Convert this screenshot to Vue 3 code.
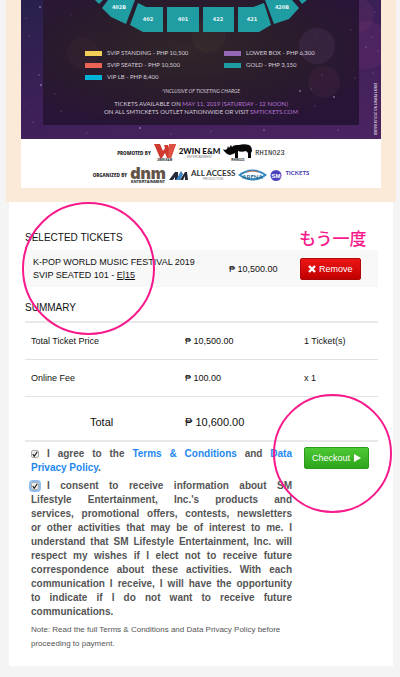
<template>
  <main class="page">
    <section class="frame">
      <div class="poster">
        <div class="art">
          <svg class="sky" viewBox="0 0 360 139" preserveAspectRatio="xMidYMin slice" aria-hidden="true">
            <defs>
              <radialGradient id="hall" cx="45%" cy="40%" r="65%">
                <stop offset="0" stop-color="#30262a" />
                <stop offset="0.55" stop-color="#2a1c2c" />
                <stop offset="1" stop-color="#281437" />
              </radialGradient>
            </defs>
            <circle cx="345" cy="45" r="24" fill="#6b2f6c" opacity="0.3" />
            <circle cx="335" cy="15" r="18" fill="#7d3a6c" opacity="0.2" />
            <rect x="22" y="0" width="316" height="125" fill="url(#hall)" />
            <circle cx="296" cy="46" r="18" fill="#6a4c7b" opacity="0.2" />
            <circle cx="303" cy="82" r="16" fill="#7b3f60" opacity="0.12" />
            <circle cx="188" cy="36" r="17" fill="#7b6a50" opacity="0.08" />
            <circle cx="62" cy="53" r="16" fill="#7b4a50" opacity="0.08" />
            <circle
              v-for="(star, i) in stars"
              :key="i"
              :cx="star[0]"
              :cy="star[1]"
              :r="star[2]"
              fill="#d9b9e6"
              opacity="0.5"
            />
            <g v-for="seat in seats" :key="seat.points">
              <polygon :points="seat.points" fill="#209da3" />
              <text :x="seat.x" :y="seat.y" class="seat-label">{{ seat.label }}</text>
            </g>
          </svg>

          <div class="art-text">
            <div class="legend">
              <ul v-for="(column, i) in legend" :key="i">
                <li v-for="item in column" :key="item.name">
                  <span class="swatch" :style="{ background: item.color }"></span>{{ item.name }} - PHP {{ item.price }}
                </li>
              </ul>
            </div>
            <p class="charge">*INCLUSIVE OF TICKETING CHARGE</p>
            <p class="outlet">TICKETS AVAILABLE ON <b>MAY 11, 2019 (SATURDAY - 12 NOON)</b></p>
            <p class="outlet">ON ALL SMTICKETS OUTLET NATIONWIDE OR VISIT <b>SMTICKETS.COM</b></p>
          </div>
          <small class="credit">EVENT PERMIT NO. 2019-04 ISSUED</small>
        </div>

        <div class="sponsors">
          <div class="sponsor-row">
            <span class="role">PROMOTED BY</span>
            <span class="logo">
              <svg width="22" height="14" viewBox="0 0 22 14" aria-hidden="true">
                <path d="M0 0h6l3 7 2-3-1-3h4l2 6 2-7h4l-5 14h-4l-2-5-3 5H6z" fill="#cf3a30" />
                <path d="M15 0h7l-5 14h-3z" fill="#de5243" />
              </svg>
              <small>2WIN E&amp;M</small>
            </span>
            <span class="logo twin"><b>2WIN E&amp;M</b><small>ENTERTAINMENT</small></span>
            <span class="logo">
              <svg width="29" height="14" viewBox="0 0 29 14" aria-hidden="true">
                <path
                  d="M0 5l2 1 2-1 1-3 1 2 2-3 1 2c2-2 4-2 7-2 3-1 7-1 10 0 2 1 3 3 3 6l-1 2v5h-3v-5l-2-2c-3 1-6 1-8 0v7h-3V9l-2 1-3 1-3-1-3-3z"
                  fill="#080808"
                />
              </svg>
              <small>RHINO23</small>
            </span>
            <span class="rhino">RHINO23</span>
          </div>
          <div class="sponsor-row">
            <span class="role">ORGANIZED BY</span>
            <span class="logo dnm"><b>dnm</b><small>ENTERTAINMENT</small></span>
            <svg width="19" height="9" viewBox="0 0 19 9" aria-hidden="true">
              <path d="M0 9l6-8h3v8H6V6L4 9z" fill="#252a38" />
              <path d="M7 9l5-9 2 3-3 6z" fill="#3b83bf" />
              <path d="M11 9l5-8h2l1 8h-3V5l-2 4z" fill="#222736" />
            </svg>
            <span class="logo access"><b>ALL ACCESS</b><small>PRODUCTION</small></span>
            <svg class="arena" width="29" height="13" viewBox="0 0 29 13" aria-hidden="true">
              <path d="M0 6Q14-5 29 6 15 17 0 6z" fill="#2e86bd" />
              <path d="M3 6q11-7 23 0-12 7-23 0z" fill="#fff" />
              <path d="M9 3q5-2 11 0" fill="none" stroke="#d5795f" />
              <text x="14.5" y="10">ARENA</text>
            </svg>
            <svg width="12" height="13" viewBox="0 0 12 13" aria-hidden="true">
              <circle cx="6" cy="6.5" r="5.5" fill="#4b43bd" />
              <text x="6" y="9" class="sm">SM</text>
            </svg>
            <span class="logo tickets"><b>TICKETS</b><small>· · · · · ·</small></span>
          </div>
        </div>
      </div>
    </section>

    <section class="card">
      <div class="title-row">
        <h2>SELECTED TICKETS</h2>
        <span class="again">もう一度</span>
      </div>

      <div class="ticket">
        <p class="event">K-POP WORLD MUSIC FESTIVAL 2019<br />SVIP SEATED 101 - <u>E|15</u></p>
        <span class="amount">₱ 10,500.00</span>
        <button type="button" class="btn remove">
          <svg width="8" height="8" viewBox="0 0 8 8" aria-hidden="true">
            <path d="M1 1l6 6M7 1L1 7" stroke="#fff" stroke-width="2.4" />
          </svg>
          Remove
        </button>
      </div>

      <h2 class="summary-title">SUMMARY</h2>
      <table class="summary">
        <tbody>
          <tr v-for="row in summary" :key="row.label">
            <th scope="row">{{ row.label }}</th>
            <td>₱ {{ row.amount }}</td>
            <td>{{ row.count }}</td>
          </tr>
          <tr class="total">
            <th scope="row">Total</th>
            <td>₱ 10,600.00</td>
            <td></td>
          </tr>
        </tbody>
      </table>

      <div class="confirm">
        <div class="terms">
          <p>
            <input id="agree" v-model="agree" type="checkbox" /><label for="agree">I agree to the</label>{{ ' ' }}
            <a href="#terms">Terms &amp; Conditions</a> and <a href="#privacy">Data</a>
            <span class="last-line"><a href="#privacy">Privacy Policy</a>.</span>
          </p>
          <p>
            <input id="consent" v-model="consent" type="checkbox" class="focused" /><label for="consent"
              ><template v-for="(line, i) in consentLines" :key="line"><br v-if="i" />{{ line }}</template
              ><span class="last-line">communications.</span></label
            >
          </p>
          <p class="note">
            Note: Read the full Terms &amp; Conditions and Data Privacy Policy before proceeding to payment.
          </p>
        </div>
        <div class="checkout">
          <button type="button" class="btn go">
            Checkout
            <svg width="8" height="8" viewBox="0 0 8 8" aria-hidden="true"><path d="M1 0l7 4-7 4z" fill="#fff" /></svg>
          </button>
          <span class="ring ring-checkout"></span>
        </div>
      </div>
      <span class="ring ring-ticket"></span>
    </section>
  </main>
</template>

<script setup>
import { ref } from 'vue';

const agree = ref(true);
const consent = ref(true);

const legend = [
  [
    { name: 'SVIP STANDING', price: '10,500', color: '#f4cf57' },
    { name: 'SVIP SEATED', price: '10,500', color: '#ea6355' },
    { name: 'VIP LB', price: '8,400', color: '#00b5d5' },
  ],
  [
    { name: 'LOWER BOX', price: '6,300', color: '#9468b5' },
    { name: 'GOLD', price: '3,150', color: '#209da3' },
  ],
];

const seats = [
  { label: '', x: 0, y: 0, points: '74,0 82,0 78,4' },
  { label: '402B', x: 98, y: 9, points: '87,0 114,0 105,24 90,17 81,8' },
  { label: '402', x: 127, y: 21, points: '117,3 125,7 142,7 142,32 122,32 109,25' },
  { label: '401', x: 162, y: 21, points: '146,7 178,7 178,32 146,32' },
  { label: '422', x: 197, y: 21, points: '182,7 213,7 213,32 182,32' },
  { label: '421', x: 231, y: 21, points: '217,7 232,7 243,3 250,25 238,32 217,32' },
  { label: '420B', x: 261, y: 9, points: '244,0 271,0 278,8 268,19 253,24' },
  { label: '', x: 0, y: 0, points: '278,0 286,0 281,4' },
];

// x, y, radius
const stars = [
  [19, 7, 1], [5, 18, 0.5], [8, 36, 0.5], [18, 75, 0.7], [20, 85, 1], [34, 94, 0.5],
  [40, 111, 0.6], [119, 128, 1], [12, 122, 0.6], [3, 104, 0.5], [66, 133, 0.5], [190, 131, 0.6],
  [301, 75, 0.6], [279, 91, 1], [290, 89, 0.6], [313, 97, 1], [262, 103, 0.6], [345, 47, 0.7],
  [351, 37, 0.5], [357, 51, 0.6], [352, 73, 0.5], [334, 78, 0.6], [294, 106, 0.5], [243, 130, 0.8],
  [330, 30, 0.5], [296, 35, 0.4], [50, 15, 0.4], [317, 130, 0.6], [150, 134, 0.5], [354, 12, 0.5],
];

const summary = [
  { label: 'Total Ticket Price', amount: '10,500.00', count: '1 Ticket(s)' },
  { label: 'Online Fee', amount: '100.00', count: 'x 1' },
];

const consentLines = [
  'I consent to receive information about SM',
  "Lifestyle Entertainment, Inc.'s products and",
  'services, promotional offers, contests, newsletters',
  'or other activities that may be of interest to me. I',
  'understand that SM Lifestyle Entertainment, Inc. will',
  'respect my wishes if I elect not to receive future',
  'correspondence about these activities. With each',
  'communication I receive, I will have the opportunity',
  'to indicate if I do not want to receive future',
];
</script>

<style>
body {
  margin: 0;
  background: #f4f4f4;
}
</style>

<style scoped>
* {
  box-sizing: border-box;
}
.page {
  padding: 0 4px 9px 6px;
  font-family: 'Liberation Sans', 'Noto Sans CJK JP', sans-serif;
  font-size: 9px;
  color: #111;
}
p,
h2,
ul {
  margin: 0;
  padding: 0;
}
.frame {
  padding: 0 15px 14px;
  background: #faead7;
}
.poster {
  background: #fff;
}
.art {
  position: relative;
  padding-top: 47px;
  height: 139px;
  overflow: hidden;
  background: linear-gradient(165deg, #28204c, #40205a 55%, #4b2462);
}
.sky {
  position: absolute;
  inset: 0;
  width: 100%;
  height: 100%;
}
.seat-label {
  fill: #e9f6f6;
  font: bold 5px 'DejaVu Sans', sans-serif;
  text-anchor: middle;
}
.art-text {
  position: relative;
  font-family: Lato, sans-serif;
  color: #d5ccd9;
  text-align: center;
}
.legend {
  display: grid;
  grid-template-columns: 139px 1fr;
  padding-left: 64px;
  font-size: 6px;
  line-height: 12px;
  text-align: left;
}
.legend li {
  display: flex;
  align-items: center;
  gap: 5px;
}
.swatch {
  width: 17px;
  height: 5px;
}
.charge {
  padding-top: 4px;
  font-size: 5px;
  font-style: italic;
  line-height: 8px;
}
.outlet {
  font-size: 6px;
  line-height: 8px;
}
.charge + .outlet {
  padding-top: 5px;
}
.outlet b {
  font-weight: normal;
  color: #b573d3;
}
.credit {
  position: absolute;
  right: 4px;
  bottom: 4px;
  writing-mode: vertical-rl;
  font-size: 3px;
  font-weight: bold;
  line-height: 4px;
  white-space: nowrap;
  color: #d8c8de;
}
.sponsors {
  padding: 3px 0 2px;
}
.sponsor-row {
  display: flex;
  align-items: center;
  justify-content: center;
  gap: 3px;
  height: 22px;
  color: #111;
}
.role {
  font: bold 6px 'Open Sans Condensed', 'DejaVu Sans Condensed', sans-serif;
}
.logo {
  display: flex;
  flex-direction: column;
  align-items: center;
}
.logo small {
  font-size: 3px;
  font-weight: bold;
  line-height: 4px;
}
.logo b {
  font-family: Lato, sans-serif;
  font-size: 8px;
  font-weight: 900;
  line-height: 8px;
}
.twin small,
.access small,
.tickets small {
  font-weight: normal;
  color: #777;
}
.rhino {
  font: 7px 'Liberation Mono', monospace;
}
.logo.dnm b {
  font-family: Inter, sans-serif;
  font-size: 16px;
  line-height: 14px;
  color: #655448;
}
.logo.dnm small {
  font-size: 4px;
}
.logo.access b {
  font-weight: 700;
  color: #333;
}
.arena text {
  fill: #17658f;
  font: bold 6px Lato, sans-serif;
  text-anchor: middle;
}
.sm {
  fill: #fff;
  font: bold 6px 'Liberation Sans', sans-serif;
  text-anchor: middle;
}
.logo.tickets b {
  font-size: 6px;
  font-weight: 700;
  line-height: 6px;
  color: #423ab0;
}
.card {
  position: relative;
  margin: 0 3px;
  padding: 24px 15px 15px 16px;
  background: #fff;
}
.title-row {
  display: grid;
  grid-template-columns: 1fr 79px;
  align-items: center;
  height: 24px;
}
h2 {
  font-size: 10px;
  font-weight: normal;
  line-height: 14px;
}
.again {
  font: 500 17px/24px 'Noto Sans CJK JP', sans-serif;
  white-space: nowrap;
  color: #f8198b;
}
.ticket {
  display: grid;
  grid-template-columns: 1fr 71px 78px;
  align-items: center;
  height: 37px;
  padding-left: 8px;
  background: #f8f8f8;
}
.event {
  line-height: 13px;
}
.btn {
  display: inline-flex;
  align-items: center;
  justify-content: center;
  gap: 3px;
  height: 22px;
  padding: 0 7px;
  justify-self: start;
  border: 1px solid;
  border-radius: 2px;
  font: 9px 'Liberation Sans', sans-serif;
  color: #fff;
  cursor: pointer;
}
.remove {
  border-color: #b00808;
  background: linear-gradient(#ee1515, #c00000);
}
.go {
  border-color: #2c9a1c;
  background: linear-gradient(#4cc935, #2da51a);
}
.summary-title {
  padding: 14px 0 6px;
}
.summary {
  width: 100%;
  border-top: 2px solid #e9e9e9;
  border-collapse: collapse;
  table-layout: fixed;
}
.summary th,
.summary td {
  height: 37px;
  padding: 0;
  border-bottom: 1px solid #e2e2e2;
  font-weight: normal;
  text-align: left;
}
.summary th {
  padding-left: 6px;
}
.summary th:first-child {
  width: 160px;
}
.summary td:last-child {
  width: 74px;
}
.summary .total th,
.summary .total td {
  height: 45px;
  padding-top: 8px;
  border-bottom: 2px solid #e9e9e9;
  font-size: 11px;
}
.summary .total th {
  padding-left: 65px;
}
.confirm {
  display: grid;
  grid-template-columns: 1fr 74px;
  column-gap: 12px;
  padding: 5px 0 0 6px;
}
.terms {
  font-size: 10px;
  font-weight: bold;
  line-height: 14px;
  text-align: justify;
  text-align-last: justify;
  color: #555;
}
.terms p + p {
  margin-top: 4px;
}
.last-line {
  display: block;
  text-align-last: left;
}
.terms a {
  color: #1e88f0;
  text-decoration: none;
}
.terms .note {
  font-size: 8px;
  font-weight: normal;
  text-align: left;
  text-align-last: left;
}
.terms input {
  appearance: none;
  width: 8px;
  height: 8px;
  margin: 0 8px 0 0;
  border: 1px solid #aaa;
  border-radius: 2px;
  background: #eee;
  vertical-align: -1px;
}
.terms input:checked {
  background: #eee
    url("data:image/svg+xml,%3Csvg xmlns='http://www.w3.org/2000/svg' viewBox='0 0 8 8'%3E%3Cpath d='M1 4l2 3 4-6' fill='none' stroke='%23222' stroke-width='1.6'/%3E%3C/svg%3E");
}
.terms .focused {
  outline: 2px solid #8fbdf0;
}
.checkout {
  position: relative;
}
.ring {
  position: absolute;
  border: 2px solid #f8198b;
  border-radius: 50%;
  pointer-events: none;
}
.ring-ticket {
  top: 0;
  left: 13px;
  width: 133px;
  height: 133px;
}
.ring-checkout {
  top: -53px;
  left: -31px;
  width: 119px;
  height: 119px;
}
</style>
